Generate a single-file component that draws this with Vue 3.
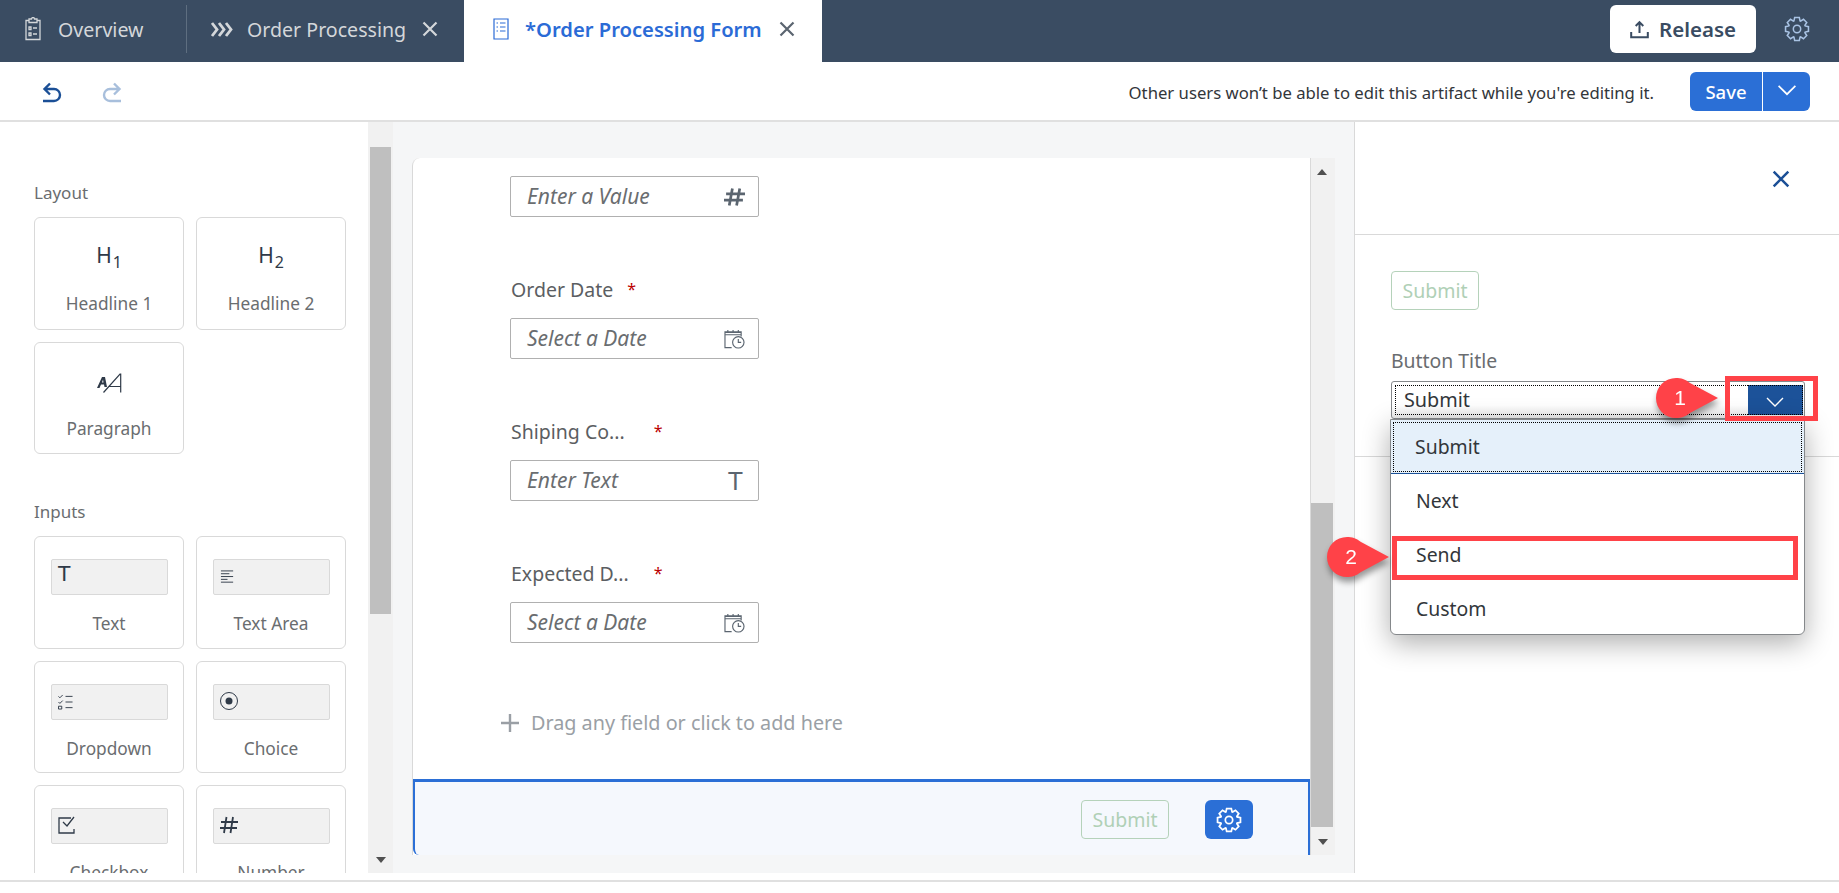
<template>
  <div class="page">
    <!-- Barre d'onglets -->
    <header class="shell">
      <div class="tab tab-overview">
        <svg class="tab-icon" viewBox="0 0 18 24" fill="none" stroke="currentColor" stroke-width="1.3">
          <path d="M5 3.500H2v19h14v-19h-3M5 2h2.500a1.500 1.500 0 0 1 3 0H13v3.500H5zM5 10h2v2.500H5zM5 16h2v2.500H5zM9 11h4M9 17h4" />
        </svg>
        <span>Overview</span>
      </div>
      <div class="tab-sep"></div>
      <div class="tab tab-process">
        <svg class="chevrons" viewBox="0 0 24 16" fill="none" stroke="currentColor" stroke-width="2.800">
          <path d="M2 1.500l5 6.500-5 6.500M9 1.500l5 6.500-5 6.500M16 1.500l5 6.500-5 6.500" />
        </svg>
        <span>Order Processing</span>
        <svg class="tab-close" viewBox="0 0 16 16" stroke="currentColor" stroke-width="2.200"><path d="M1.500 1.500l13 13M14.500 1.500l-13 13" /></svg>
      </div>
      <div class="tab tab-active">
        <svg class="tab-icon form-icon" viewBox="0 0 16 24" fill="none" stroke="currentColor" stroke-width="1.200">
          <path d="M1 2h14v20H1zM3.500 6h1.500M7 6h5.500M3.500 10h1.500M7 10h5.500M3.500 14h1.500M7 14h5.500" />
        </svg>
        <span>*Order Processing Form</span>
        <svg class="tab-close" viewBox="0 0 16 16" stroke="currentColor" stroke-width="2.200"><path d="M1.500 1.500l13 13M14.500 1.500l-13 13" /></svg>
      </div>
      <button class="btn-release">
        <svg viewBox="0 0 16 16" fill="none" stroke="currentColor" stroke-width="1.700"><path d="M8 11V2M4.800 5L8 1.800 11.200 5M1 10v4.500h14V10" /></svg>
        Release
      </button>
      <svg class="shell-gear" viewBox="0 0 24 24" fill="none" stroke="currentColor" stroke-width="1.400">
        <path :d="gearPath" /><circle cx="12" cy="12" r="3.400" />
      </svg>
    </header>

    <!-- Barre d'outils -->
    <div class="toolbar">
      <svg class="undo" viewBox="0 0 22 24" fill="none" stroke="currentColor" stroke-width="2.400">
        <path d="M9 1.500L3.500 7 9 12.500M4 7h9a6 6 0 0 1 6 6v0a6 6 0 0 1-6 6H2" />
      </svg>
      <svg class="redo" viewBox="0 0 22 24" fill="none" stroke="currentColor" stroke-width="2.400">
        <path d="M13 1.500L18.500 7 13 12.500M18 7H9a6 6 0 0 0-6 6v0a6 6 0 0 0 6 6h11" />
      </svg>
      <p class="lock-msg">Other users won’t be able to edit this artifact while you're editing it.</p>
      <div class="save-group">
        <button class="btn-save">Save</button>
        <button class="btn-save-arrow">
          <svg viewBox="0 0 16 10" fill="none" stroke="currentColor" stroke-width="1.400"><path d="M1 1.500l7 7 7-7" /></svg>
        </button>
      </div>
    </div>

    <div class="workspace">
      <!-- Palette -->
      <aside class="palette">
        <div class="palette-scroll">
          <h3 class="group-title">Layout</h3>
          <div class="card-grid">
            <div class="card">
              <div class="heading-glyph">H<sub>1</sub></div>
              <span class="card-label">Headline 1</span>
            </div>
            <div class="card">
              <div class="heading-glyph">H<sub>2</sub></div>
              <span class="card-label">Headline 2</span>
            </div>
            <div class="card">
              <svg class="para-glyph" viewBox="0 0 26 20" fill="none" stroke="#2f3a48">
                <path d="M1 15L6 4h3l2 10H8.500L8 11.500H5L3.500 15z M6 9.500h1.500L7 6.500z" fill="#2f3a48" stroke="none" fill-rule="evenodd" />
                <path d="M7.500 19.500L24 1h0.700v18.500M13 13.500h11.500" stroke-width="1.200" />
              </svg>
              <span class="card-label">Paragraph</span>
            </div>
          </div>

          <h3 class="group-title inputs-title">Inputs</h3>
          <div class="card-grid">
            <div class="card" v-for="c in inputCards" :key="c.label">
              <div class="mini-input">
                <span v-if="c.icon === 'text'" class="mini-t">T</span>
                <svg v-else-if="c.icon === 'area'" class="mini-icon" viewBox="0 0 16 16" stroke="#2f3a48" stroke-width="1">
                  <path d="M1 1.500h13M1 4.500h9M1 7.500h13M1 10.500h7M1 13.500h13" />
                </svg>
                <svg v-else-if="c.icon === 'list'" class="mini-icon" viewBox="0 0 16 16" fill="none" stroke="#2f3a48" stroke-width="1">
                  <path d="M0.500 2l1.500 1.500L5 0.500M0.500 8l1.500 1.500L5 6.500M0.500 12.500h3.500v3H0.500zM8 2h7.500M8 8h7.500M8 14h7.500" />
                </svg>
                <svg v-else-if="c.icon === 'radio'" class="mini-icon radio" viewBox="0 0 18 18" fill="none" stroke="#2f3a48" stroke-width="1">
                  <circle cx="9" cy="9" r="8.500" /><circle cx="9" cy="9" r="3.500" fill="#2f3a48" stroke="none" />
                </svg>
                <svg v-else-if="c.icon === 'check'" class="mini-icon radio" viewBox="0 0 18 18" fill="none" stroke="#2f3a48" stroke-width="1.300">
                  <path d="M13 2H1v15h15v-4M5 6l4 4 7-9" />
                </svg>
                <svg v-else class="mini-icon radio" viewBox="0 0 18 18" fill="none" stroke="#2f3a48" stroke-width="1.800">
                  <path d="M6.500 1L4 17M13 1l-2.500 16M1 6h17M0 12h17" />
                </svg>
              </div>
              <span class="card-label">{{ c.label }}</span>
            </div>
          </div>
        </div>
        <div class="scrollbar palette-bar">
          <div class="palette-thumb"></div>
          <span class="arrow-down"></span>
        </div>
      </aside>

      <!-- Formulaire -->
      <main class="canvas">
        <div class="form-card">
          <div class="form-scroll">
            <div class="fields">
              <div class="field field-first">
                <div class="input">
                  <em>Enter a Value</em>
                  <svg class="input-icon" viewBox="0 0 20 18" fill="none" stroke="#5b6570" stroke-width="2.600">
                    <path d="M8 1L5 17M15 1l-3 16M2 6h18M0 12h18" />
                  </svg>
                </div>
              </div>
              <div class="field" v-for="f in fields" :key="f.label">
                <label :class="['field-label', f.cut]">{{ f.label }}<i>*</i></label>
                <div class="input">
                  <em>{{ f.hint }}</em>
                  <span v-if="f.icon === 'text'" class="input-t">T</span>
                  <svg v-else class="input-icon" viewBox="0 0 22 21" fill="none" stroke="#5b6570" stroke-width="1.200">
                    <path d="M8 19.500H1V3h17v5M1 3.500h17v2.500H1zM4 1v2M9.500 1v2M15 1v2" />
                    <circle cx="15" cy="14" r="6" /><path d="M15 10.500V14h3" />
                  </svg>
                </div>
              </div>
            </div>
            <div class="drop-hint">
              <svg viewBox="0 0 18 18" stroke="#9a9fa5" stroke-width="2.400"><path d="M9 0v18M0 9h18" /></svg>
              Drag any field or click to add here
            </div>
            <div class="form-footer">
              <button class="btn-ghost">Submit</button>
              <button class="btn-gear">
                <svg viewBox="0 0 24 24" fill="none" stroke="#fff" stroke-width="1.600">
                  <path :d="gearPath" /><circle cx="12" cy="12" r="3.400" />
                </svg>
              </button>
            </div>
          </div>
          <div class="scrollbar form-bar">
            <span class="arrow-up"></span>
            <div class="form-thumb"></div>
            <span class="arrow-down"></span>
          </div>
        </div>
      </main>

      <!-- Propriétés -->
      <aside class="props">
        <div class="props-head">
          <svg viewBox="0 0 16 16" stroke="#1b4f96" stroke-width="2.200"><path d="M1.500 1.500l13 13M14.500 1.500l-13 13" /></svg>
        </div>
        <div class="props-body">
          <button class="btn-ghost">Submit</button>
          <label class="props-label">Button Title</label>
          <div class="select">
            <span class="select-value">Submit</span>
            <span class="select-arrow">
              <svg viewBox="0 0 18 10" fill="none" stroke="#fff" stroke-width="1.400"><path d="M1 1l8 8 8-8" /></svg>
            </span>
          </div>
        </div>
        <div class="props-rule"></div>
      </aside>
    </div>
    <div class="page-foot"></div>

    <!-- Menu ouvert et annotations -->
    <ul class="menu">
      <li class="menu-on"><span>Submit</span></li>
      <li>Next</li>
      <li>Send</li>
      <li>Custom</li>
    </ul>
    <div class="mark mark-arrow"></div>
    <div class="mark mark-send"></div>
    <div class="callout callout-1">
      <svg viewBox="0 0 62 40"><path d="M20 0c5 0 9 1 14 5l28 15-28 15c-5 4-9 5-14 5a20 20 0 0 1 0-40z" fill="#ff4248" /></svg>
      <span>1</span>
    </div>
    <div class="callout callout-2">
      <svg viewBox="0 0 62 40"><path d="M20 0c5 0 9 1 14 5l28 15-28 15c-5 4-9 5-14 5a20 20 0 0 1 0-40z" fill="#ff4248" /></svg>
      <span>2</span>
    </div>
  </div>
</template>

<script setup>
import { computed } from 'vue'

const inputCards = [
  { label: 'Text', icon: 'text' },
  { label: 'Text Area', icon: 'area' },
  { label: 'Dropdown', icon: 'list' },
  { label: 'Choice', icon: 'radio' },
  { label: 'Checkbox', icon: 'check' },
  { label: 'Number', icon: 'hash' }
]

const fields = [
  { label: 'Order Date', hint: 'Select a Date', icon: 'date', cut: 'w-a' },
  { label: 'Shiping Co...', hint: 'Enter Text', icon: 'text', cut: 'w-b' },
  { label: 'Expected D...', hint: 'Select a Date', icon: 'date', cut: 'w-c' }
]

// Contour de roue dentée à 8 dents
const gearPath = computed(() => {
  const pts = []
  for (let i = 0; i < 8; i++) {
    const a = (i * Math.PI) / 4
    for (const [r, d] of [[8, -0.36], [10.8, -0.2], [10.8, 0.2], [8, 0.36]]) {
      pts.push(`${(12 + r * Math.sin(a + d)).toFixed(2)} ${(12 - r * Math.cos(a + d)).toFixed(2)}`)
    }
  }
  return `M${pts.join('L')}Z`
})
</script>

<style>
html, body {
  margin: 0;
  background: #fff;
  overflow: hidden;
}
</style>

<style scoped>
.page {
  position: relative;
  width: 1839px;
  height: 893px;
  overflow: hidden;
  font-family: "Noto Sans", "Open Sans", sans-serif;
  color: #32363a;
  display: flex;
  flex-direction: column;
}

button {
  font-family: inherit;
  cursor: pointer;
}

/* Onglets */
.shell {
  height: 62px;
  flex-shrink: 0;
  background: #3a4c62;
  display: flex;
  align-items: stretch;
  color: #d4d7da;
  font-size: 19.6px;
}

.tab {
  display: flex;
  align-items: center;
  padding-bottom: 4px;
}

.tab-icon {
  width: 18px;
  height: 24px;
}

.tab-overview {
  width: 186px;
  padding-left: 24px;
  gap: 16px;
  box-sizing: border-box;
}

.tab-sep {
  width: 1px;
  margin: 5px 0 9px;
  background: #5e6e80;
}

.tab-process {
  width: 277px;
  padding-left: 23px;
  gap: 13px;
  box-sizing: border-box;
}

.chevrons {
  width: 24px;
  height: 17px;
}

.tab-close {
  width: 16px;
  height: 16px;
  margin-left: 3px;
}

.tab-active {
  width: 358px;
  box-sizing: border-box;
  padding-left: 29px;
  gap: 16px;
  background: #fff;
  color: #2b6bd6;
  font-size: 20.2px;
  font-weight: 600;
}

.form-icon {
  width: 16px;
}

.tab-active .tab-close {
  color: #5b6570;
  margin-left: 1px;
}

.btn-release {
  margin: 5px 0 9px auto;
  width: 146px;
  border: none;
  border-radius: 6px;
  background: #fff;
  color: #3a4c62;
  font-size: 20.5px;
  font-weight: 600;
  display: flex;
  align-items: center;
  justify-content: center;
  gap: 10px;
}

.btn-release svg {
  width: 19px;
  height: 19px;
}

.shell-gear {
  width: 26px;
  height: 26px;
  margin: 16px 29px 0 28px;
  color: #a9c3e4;
}

/* Barre d'outils */
.toolbar {
  height: 60px;
  flex-shrink: 0;
  box-sizing: border-box;
  border-bottom: 2px solid #e0e0e0;
  display: flex;
  align-items: center;
  padding: 0 29px 0 41px;
}

.undo,
.redo {
  width: 22px;
  height: 24px;
  color: #1b4f96;
  margin-top: 5px;
}

.redo {
  margin-left: 38px;
  color: #a8bfdc;
}

.lock-msg {
  margin: 2px 36px 0 auto;
  font-size: 16.700px;
  color: #32363a;
}

.save-group {
  display: flex;
  height: 39px;
  gap: 1px;
}

.btn-save,
.btn-save-arrow {
  border: none;
  background: #2b6fd6;
  color: #fff;
  padding: 0;
}

.btn-save {
  width: 72px;
  font-size: 18.500px;
  font-weight: 500;
  border-radius: 6px 0 0 6px;
}

.btn-save-arrow {
  width: 47px;
  border-radius: 0 6px 6px 0;
}

.btn-save-arrow svg {
  width: 20px;
  height: 12px;
}

/* Zone de travail */
.workspace {
  height: 751px;
  flex-shrink: 0;
  display: flex;
  overflow: hidden;
}

.page-foot {
  margin-top: 7px;
  height: 2px;
  background: #e0e0e0;
}

.palette {
  width: 393px;
  flex-shrink: 0;
  display: flex;
}

.palette-scroll {
  width: 368px;
  box-sizing: border-box;
  padding: 60px 22px 0 34px;
  overflow: hidden;
}

.group-title {
  margin: 0;
  font-size: 17px;
  line-height: 22px;
  font-weight: 400;
  color: #6a6d70;
}

.inputs-title {
  margin-top: 47px;
}

.card-grid {
  display: grid;
  grid-template-columns: 150px 150px;
  gap: 12px;
  margin-top: 13px;
}

.card {
  height: 112.500px;
  box-sizing: border-box;
  border: 1px solid #d9d9d9;
  border-radius: 6px;
  background: #fff;
  display: flex;
  flex-direction: column;
  align-items: center;
  flex-shrink: 0;
}

.heading-glyph {
  margin-top: 22px;
  height: 53px;
  font-size: 21px;
  line-height: 30px;
  color: #2f3a48;
}

.heading-glyph sub {
  font-size: 16px;
  line-height: 0;
  margin-left: 1px;
}

.para-glyph {
  width: 26px;
  height: 20px;
  margin: 30px 0 25px;
}

.card-label {
  font-size: 17.300px;
  line-height: 22px;
  color: #6a6d70;
}

.mini-input {
  width: 117px;
  height: 36px;
  margin: 22px 0 18px;
  box-sizing: border-box;
  border: 1px solid #d9d9d9;
  border-radius: 2px;
  background: #f1f1f1;
  padding-left: 6px;
  display: flex;
  align-items: flex-start;
}

.mini-t {
  font-family: "Liberation Sans", sans-serif;
  font-size: 22px;
  line-height: 28px;
  color: #2f3a48;
}

.mini-icon {
  width: 15px;
  height: 16px;
  margin-top: 9px;
}

.mini-icon.radio {
  width: 18px;
  height: 18px;
  margin-top: 7px;
}

/* Barres de défilement */
.scrollbar {
  background: #f1f1f1;
  position: relative;
  flex-shrink: 0;
}

.palette-bar {
  width: 25px;
  padding-left: 2px;
  box-sizing: border-box;
}

.palette-thumb {
  width: 21px;
  margin-top: 25px;
  height: 467px;
  background: #bfbfbf;
}

.palette-bar .arrow-down {
  position: absolute;
  left: 8px;
  bottom: 10px;
}

.arrow-down,
.arrow-up {
  display: block;
  width: 0;
  height: 0;
  border-left: 5px solid transparent;
  border-right: 5px solid transparent;
}

.arrow-down {
  border-top: 6px solid #505050;
}

.arrow-up {
  border-bottom: 6px solid #505050;
}

/* Formulaire */
.canvas {
  width: 961px;
  flex-shrink: 0;
  background: #f5f6f7;
  padding: 36px 0 0 19px;
  box-sizing: border-box;
}

.form-card {
  width: 923px;
  height: 697px;
  display: flex;
  background: #fff;
  border-radius: 8px 0 0 0;
  overflow: hidden;
  border-left: 1px solid #d9d9d9;
  box-sizing: border-box;
}

.form-scroll {
  width: 898px;
  flex-shrink: 0;
  border-right: 1px solid #d9d9d9;
  box-sizing: border-box;
  display: flex;
  flex-direction: column;
}

.fields {
  padding-left: 97px;
  flex: 1;
}

.field {
  width: 249px;
  height: 142px;
}

.field-first {
  height: 101px;
  padding-top: 18px;
}

.field-label {
  display: block;
  height: 41px;
  font-size: 19.500px;
  line-height: 24px;
  color: #5b5e62;
  padding-left: 1px;
  white-space: nowrap;
}

.field-label i {
  color: #b00;
  font-size: 16px;
  font-style: normal;
  margin-left: 14px;
  vertical-align: 2px;
}

.field-label.w-b i {
  margin-left: 29px;
}

.field-label.w-c i {
  margin-left: 25px;
}

.input {
  height: 41px;
  box-sizing: border-box;
  border: 1px solid #b0b0b0;
  border-radius: 2px;
  background: #fff;
  display: flex;
  align-items: center;
  justify-content: space-between;
  padding: 0 13px 0 16px;
}

.input em {
  font-size: 21px;
  line-height: 26px;
  margin-top: -2px;
  color: #6a6d70;
}

.input-icon {
  width: 21px;
  height: 20px;
}

.input-t {
  font-family: "Liberation Sans", sans-serif;
  font-size: 25px;
  line-height: 30px;
  color: #5b6570;
  margin-right: 2px;
}

.drop-hint {
  display: flex;
  align-items: center;
  gap: 12px;
  padding-left: 88px;
  height: 40px;
  margin-bottom: 37px;
  font-size: 19.800px;
  color: #9a9fa5;
}

.drop-hint svg {
  width: 18px;
  height: 18px;
}

.form-footer {
  height: 76px;
  flex-shrink: 0;
  box-sizing: border-box;
  border: solid #2b6fd6;
  border-width: 3px 2px 0;
  border-radius: 0 0 0 6px;
  background: #f5f8fd;
  display: flex;
  align-items: flex-start;
  justify-content: flex-end;
  gap: 36px;
  padding: 18px 55px 0 0;
}

.btn-ghost {
  width: 88px;
  height: 39px;
  box-sizing: border-box;
  border: 1px solid #b5d2ba;
  border-radius: 4px;
  background: #fff;
  color: #b0d0b6;
  font-size: 19.500px;
  padding: 0;
}

.form-footer .btn-ghost {
  background: transparent;
}

.btn-gear {
  width: 48px;
  height: 39px;
  border: none;
  border-radius: 6px;
  background: #2b6fd6;
  padding: 0;
  display: flex;
  align-items: center;
  justify-content: center;
}

.btn-gear svg {
  width: 26px;
  height: 26px;
}

.form-bar {
  width: 24px;
}

.form-bar .arrow-up {
  position: absolute;
  left: 6px;
  top: 11px;
}

.form-bar .arrow-down {
  position: absolute;
  left: 7px;
  bottom: 10px;
}

.form-thumb {
  position: absolute;
  left: 0;
  top: 345px;
  width: 22px;
  height: 324px;
  background: #bfbfbf;
}

/* Propriétés */
.props {
  flex: 1;
  border-left: 1px solid #d9d9d9;
  background: #fff;
  box-sizing: border-box;
}

.props-head {
  height: 113px;
  box-sizing: border-box;
  border-bottom: 1px solid #d9d9d9;
  display: flex;
  align-items: flex-start;
  justify-content: flex-end;
  padding: 48px 49px 0 0;
}

.props-head svg {
  width: 18px;
  height: 18px;
}

.props-body {
  padding: 36px 34px 0 36px;
}

.props-label {
  display: block;
  margin-top: 39px;
  font-size: 19.400px;
  line-height: 24px;
  color: #6a6d70;
}

.select {
  margin-top: 8px;
  height: 38px;
  width: 414px;
  box-sizing: border-box;
  border: 1px solid #85888b;
  border-radius: 3px;
  background: linear-gradient(#fff 65%, #ececec);
  padding: 3px 1px 3px 3px;
  display: flex;
}

.select-value {
  flex: 1;
  border: 1px dotted #000;
  border-right: none;
  padding-left: 8px;
  font-size: 19.800px;
  line-height: 28px;
  color: #32363a;
}

.select-arrow {
  width: 54px;
  background: #1c5299;
  border: 1px dotted #000;
  border-left: none;
  display: flex;
  align-items: center;
  justify-content: center;
}

.select-arrow svg {
  width: 18px;
  height: 10px;
  margin-top: 3px;
}

.props-rule {
  margin-top: 37px;
  height: 1px;
  background: #d9d9d9;
}

/* Menu */
.menu {
  position: absolute;
  left: 1390px;
  top: 419px;
  width: 415px;
  height: 216px;
  box-sizing: border-box;
  margin: 0;
  padding: 0;
  list-style: none;
  background: #fff;
  border: 1px solid #85888b;
  border-radius: 0 0 6px 6px;
  box-shadow: 0 8px 28px rgba(0, 0, 0, 0.32);
  font-size: 19.400px;
  color: #32363a;
}

.menu li {
  height: 54px;
  line-height: 53px;
  padding-left: 25px;
}

.menu .menu-on {
  height: 54px;
  box-sizing: border-box;
  background: #e5f0fa;
  border-bottom: 1px solid #1c5299;
  padding: 2px;
  line-height: 48px;
}

.menu-on span {
  display: block;
  height: 48px;
  border: 1px dotted #000;
  padding-left: 21px;
  line-height: 48px;
}

/* Annotations */
.mark {
  position: absolute;
  box-sizing: border-box;
  border: 5px solid #ff4248;
}

.mark-arrow {
  left: 1725px;
  top: 376px;
  width: 93px;
  height: 45px;
}

.mark-send {
  left: 1392px;
  top: 536px;
  width: 406px;
  height: 44px;
}

.callout {
  position: absolute;
  width: 62px;
  height: 40px;
  filter: drop-shadow(1px 5px 3px rgba(0, 0, 0, 0.4));
}

.callout svg {
  display: block;
  width: 62px;
  height: 40px;
}

.callout span {
  position: absolute;
  left: 4px;
  top: 0;
  width: 40px;
  text-align: center;
  color: #fff;
  font-family: "Liberation Sans", sans-serif;
  font-size: 21px;
  line-height: 40px;
}

.callout-1 {
  left: 1656px;
  top: 378px;
}

.callout-2 {
  left: 1327px;
  top: 537px;
}
</style>
